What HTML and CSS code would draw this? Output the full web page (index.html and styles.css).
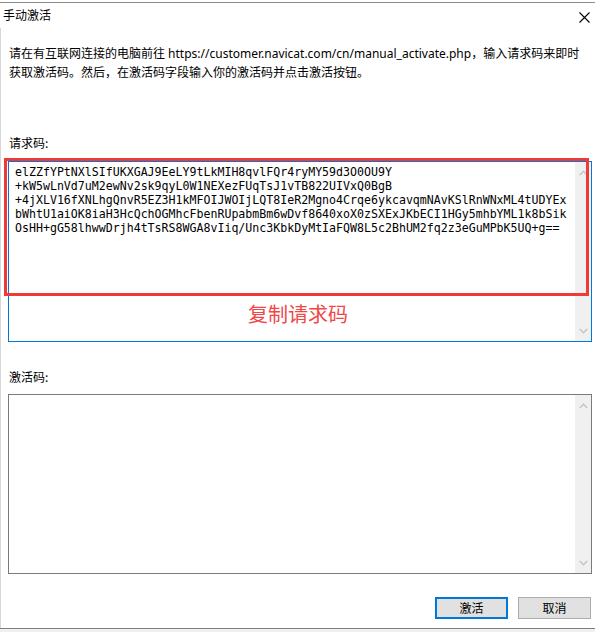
FILE: index.html
```html
<!DOCTYPE html>
<html lang="zh-CN">
<head>
<meta charset="utf-8">
<title>手动激活</title>
<link rel="stylesheet" href="styles.css">
</head>
<body>
<div class="window">
  <div class="titlebar">
    <span class="title">手动激活</span>
    <svg class="close" width="11" height="11" viewBox="0 0 11 11"><path d="M0.5 0.5 L10.5 10.5 M10.5 0.5 L0.5 10.5" stroke="#000" stroke-width="1.1" fill="none"/></svg>
  </div>
  <div class="main">
    <p class="desc">请在有互联网连接的电脑前往 https://customer.navicat.com/cn/manual_activate.php，输入请求码来即时<br>获取激活码。然后，在激活码字段输入你的激活码并点击激活按钮。</p>
    <div class="label label-req">请求码:</div>
    <div class="field field-focus">
      <div class="code">elZZfYPtNXlSIfUKXGAJ9EeLY9tLkMIH8qvlFQr4ryMY59d3O0OU9Y
+kW5wLnVd7uM2ewNv2sk9qyL0W1NEXezFUqTsJ1vTB822UIVxQ0BgB
+4jXLV16fXNLhgQnvR5EZ3H1kMFOIJWOIjLQT8IeR2Mgno4Crqe6ykcavqmNAvKSlRnWNxML4tUDYEx
bWhtU1aiOK8iaH3HcQchOGMhcFbenRUpabmBm6wDvf8640xoX0zSXExJKbECI1HGy5mhbYML1k8bSik
OsHH+gG58lhwwDrjh4tTsRS8WGA8vIiq/Unc3KbkDyMtIaFQW8L5c2BhUM2fq2z3eGuMPbK5UQ+g==</div>
      <div class="scrollbar">
        <svg class="arrow" width="9" height="6" viewBox="0 0 9 6"><path d="M0.8 5 L4.5 1.3 L8.2 5" stroke="#c4c4c4" stroke-width="1.5" fill="none"/></svg>
        <svg class="arrow" width="9" height="6" viewBox="0 0 9 6"><path d="M0.8 1 L4.5 4.7 L8.2 1" stroke="#c4c4c4" stroke-width="1.5" fill="none"/></svg>
      </div>
    </div>
    <div class="label label-act">激活码:</div>
    <div class="field field-plain">
      <div class="code"></div>
      <div class="scrollbar">
        <svg class="arrow" width="9" height="6" viewBox="0 0 9 6"><path d="M0.8 5 L4.5 1.3 L8.2 5" stroke="#c4c4c4" stroke-width="1.5" fill="none"/></svg>
        <svg class="arrow" width="9" height="6" viewBox="0 0 9 6"><path d="M0.8 1 L4.5 4.7 L8.2 1" stroke="#c4c4c4" stroke-width="1.5" fill="none"/></svg>
      </div>
    </div>
    <div class="buttons">
      <button class="btn btn-default">激活</button>
      <button class="btn">取消</button>
    </div>
  </div>
  <div class="footer"></div>
  <div class="annot-box"></div>
  <div class="annot-label">复制请求码</div>
</div>
</body>
</html>
```
FILE: styles.css
```css
* { box-sizing: border-box; }
html, body { margin: 0; padding: 0; background: #fff; }
body {
  width: 595px;
  height: 632px;
  overflow: hidden;
  font-family: "Noto Sans CJK SC", sans-serif;
  font-size: 12px;
  color: #000;
}
.window {
  position: relative;
  width: 595px;
  height: 632px;
}
.titlebar {
  margin-top: 2px;
  height: 26px;
  border-top: 1px solid #8a8a8a;
  display: flex;
  justify-content: space-between;
  align-items: flex-start;
  padding: 5px 5px 0 3px;
}
.title {
  line-height: 14px;
  font-size: 12px;
}
.close {
  margin-top: 4px;
}
.main {
  height: 600px;
  border-left: 1px solid #d6d6d6;
  padding: 16px 3px 0 7px;
  display: flex;
  flex-direction: column;
}
.desc {
  margin: 0 0 0 1px;
  line-height: 19px;
  white-space: nowrap;
  font-family: "Noto Sans", "Noto Sans CJK SC", sans-serif;
  font-size: 12px;
}
.label {
  line-height: 16px;
  padding-left: 1px;
}
.label-req { margin-top: 53px; }
.label-act { margin-top: 27px; }
.field {
  display: flex;
  border: 1px solid #7a7a7a;
  background: #fff;
}
.field-focus {
  margin-top: 10px;
  height: 181px;
  border-color: #0078d7;
}
.field-plain {
  margin-top: 9px;
  height: 180px;
}
.code {
  flex: 1;
  padding: 3px 0 0 6px;
  font-family: "DejaVu Sans Mono", monospace;
  font-size: 11.6px;
  line-height: 14px;
  white-space: pre;
  overflow: hidden;
}
.scrollbar {
  width: 16px;
  background: #f0f0f0;
  display: flex;
  flex-direction: column;
  justify-content: space-between;
  align-items: center;
  padding: 8px 0 7px;
}
.arrow { display: block; }
.buttons {
  margin-top: 23px;
  display: flex;
  justify-content: flex-end;
  gap: 10px;
  padding-right: 1px;
}
.btn {
  width: 73px;
  height: 22px;
  margin: 0;
  padding: 0;
  background: #e1e1e1;
  border: 1px solid #adadad;
  font-family: "Noto Sans CJK SC", sans-serif;
  font-size: 12px;
  line-height: 18px;
  color: #000;
}
.btn-default {
  border: 2px solid #0078d7;
}
.footer {
  height: 4px;
  border-top: 1px solid #7f7f7f;
  background: #f0f0f0;
}
.annot-box {
  position: absolute;
  left: 4px;
  top: 156px;
  width: 585px;
  height: 138px;
  border: 3px solid #f03a3a;
}
.annot-label {
  position: absolute;
  left: 248px;
  top: 299px;
  font-size: 20px;
  line-height: 26px;
  color: #f04848;
  font-family: "Noto Sans CJK SC", sans-serif;
}
```
